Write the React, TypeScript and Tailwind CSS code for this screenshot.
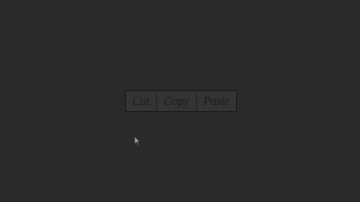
export default function App() {
  const items = [
    { t: "Cut", w: "w-[30px]" },
    { t: "Copy", w: "w-[40px]" },
    { t: "Paste", w: "w-[40px]" },
  ];
  return (
    <div className="relative w-[360px] h-[202px] bg-[#2a2a2a] flex items-center justify-center">
      <div className="flex h-[22px] ml-[2px] border border-[#1c1c1c] bg-[#343434]">
        {items.map((it, i) => (
          <div
            key={it.t}
            className={`${it.w} flex items-center justify-center text-[12px] italic text-[#1c1c1c] ${i > 0 ? "border-l border-[#262626]" : ""}`}
            style={{ fontFamily: "'Liberation Serif', serif" }}
          >
            {it.t}
          </div>
        ))}
      </div>
      <svg className="absolute left-[134px] top-[136px]" width="7" height="10" viewBox="0 0 7 10">
        <path d="M0.5 0.5 L0.5 8 L2.5 6.2 L4 9.5 L5 9 L3.6 5.8 L6 5.8 Z" fill="#9a9a9a" stroke="#222" strokeWidth="0.6" />
      </svg>
    </div>
  );
}
